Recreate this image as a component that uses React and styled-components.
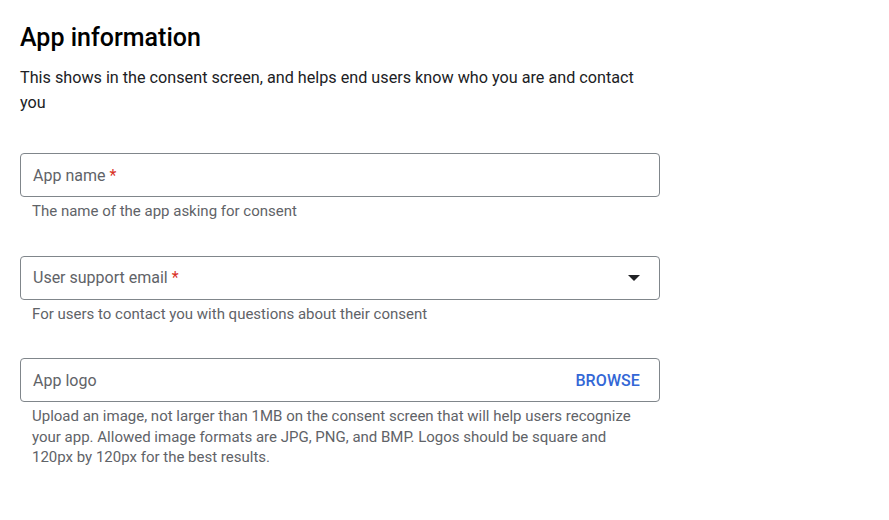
import React from "react";
import styled, { createGlobalStyle } from "styled-components";

const Global = createGlobalStyle`
  html, body { margin: 0; padding: 0; background: #fff; }
  body { font-family: Roboto, "Noto Sans", Arial, sans-serif; color: #202124; }
`;

const Page = styled.div`
  padding: 24px 20px 40px 20px;
  width: 640px;
`;

const Title = styled.h2`
  margin: 0;
  font-size: 25px;
  line-height: 28px;
  font-weight: 500;
  color: #000;
`;

const Intro = styled.p`
  margin: 13px 0 0 0;
  max-width: 622px;
  font-size: 16.2px;
  line-height: 25px;
  color: #202124;
`;

const Form = styled.div`
  margin-top: 38px;
  display: flex;
  flex-direction: column;
  gap: 34px;
`;

const Field = styled.div`
  display: flex;
  flex-direction: column;
`;

const Box = styled.div`
  box-sizing: border-box;
  height: 44px;
  border: 1px solid #80868b;
  border-radius: 4px;
  display: flex;
  align-items: center;
  padding: 0 19px 0 12px;
`;

const Label = styled.span`
  flex: 1;
  font-size: 16px;
  color: #5f6368;
`;

const Star = styled.span`
  color: #d93025;
`;

const Browse = styled.button`
  border: none;
  background: none;
  padding: 0;
  font-family: inherit;
  font-size: 16px;
  font-weight: 500;
  letter-spacing: 0.1px;
  color: #3367d6;
  text-transform: uppercase;
  cursor: pointer;
`;

const Helper = styled.div`
  padding: 4px 12px 0 12px;
  font-size: 15px;
  line-height: 20.5px;
  color: #5f6368;
`;

const Caret = () => (
  <svg width="12" height="6" viewBox="0 0 12 6">
    <path d="M0 0 L12 0 L6 6 Z" fill="#202124" />
  </svg>
);

export default function App() {
  return (
    <>
      <Global />
      <Page>
        <Title>App information</Title>
        <Intro>
          This shows in the consent screen, and helps end users know who you are and contact you
        </Intro>
        <Form>
          <Field>
            <Box>
              <Label>
                App name <Star>*</Star>
              </Label>
            </Box>
            <Helper>The name of the app asking for consent</Helper>
          </Field>
          <Field>
            <Box>
              <Label>
                User support email <Star>*</Star>
              </Label>
              <Caret />
            </Box>
            <Helper>For users to contact you with questions about their consent</Helper>
          </Field>
          <Field>
            <Box>
              <Label>App logo</Label>
              <Browse>Browse</Browse>
            </Box>
            <Helper>
              Upload an image, not larger than 1MB on the consent screen that will help users recognize
              your app. Allowed image formats are JPG, PNG, and BMP. Logos should be square and 120px
              by 120px for the best results.
            </Helper>
          </Field>
        </Form>
      </Page>
    </>
  );
}
